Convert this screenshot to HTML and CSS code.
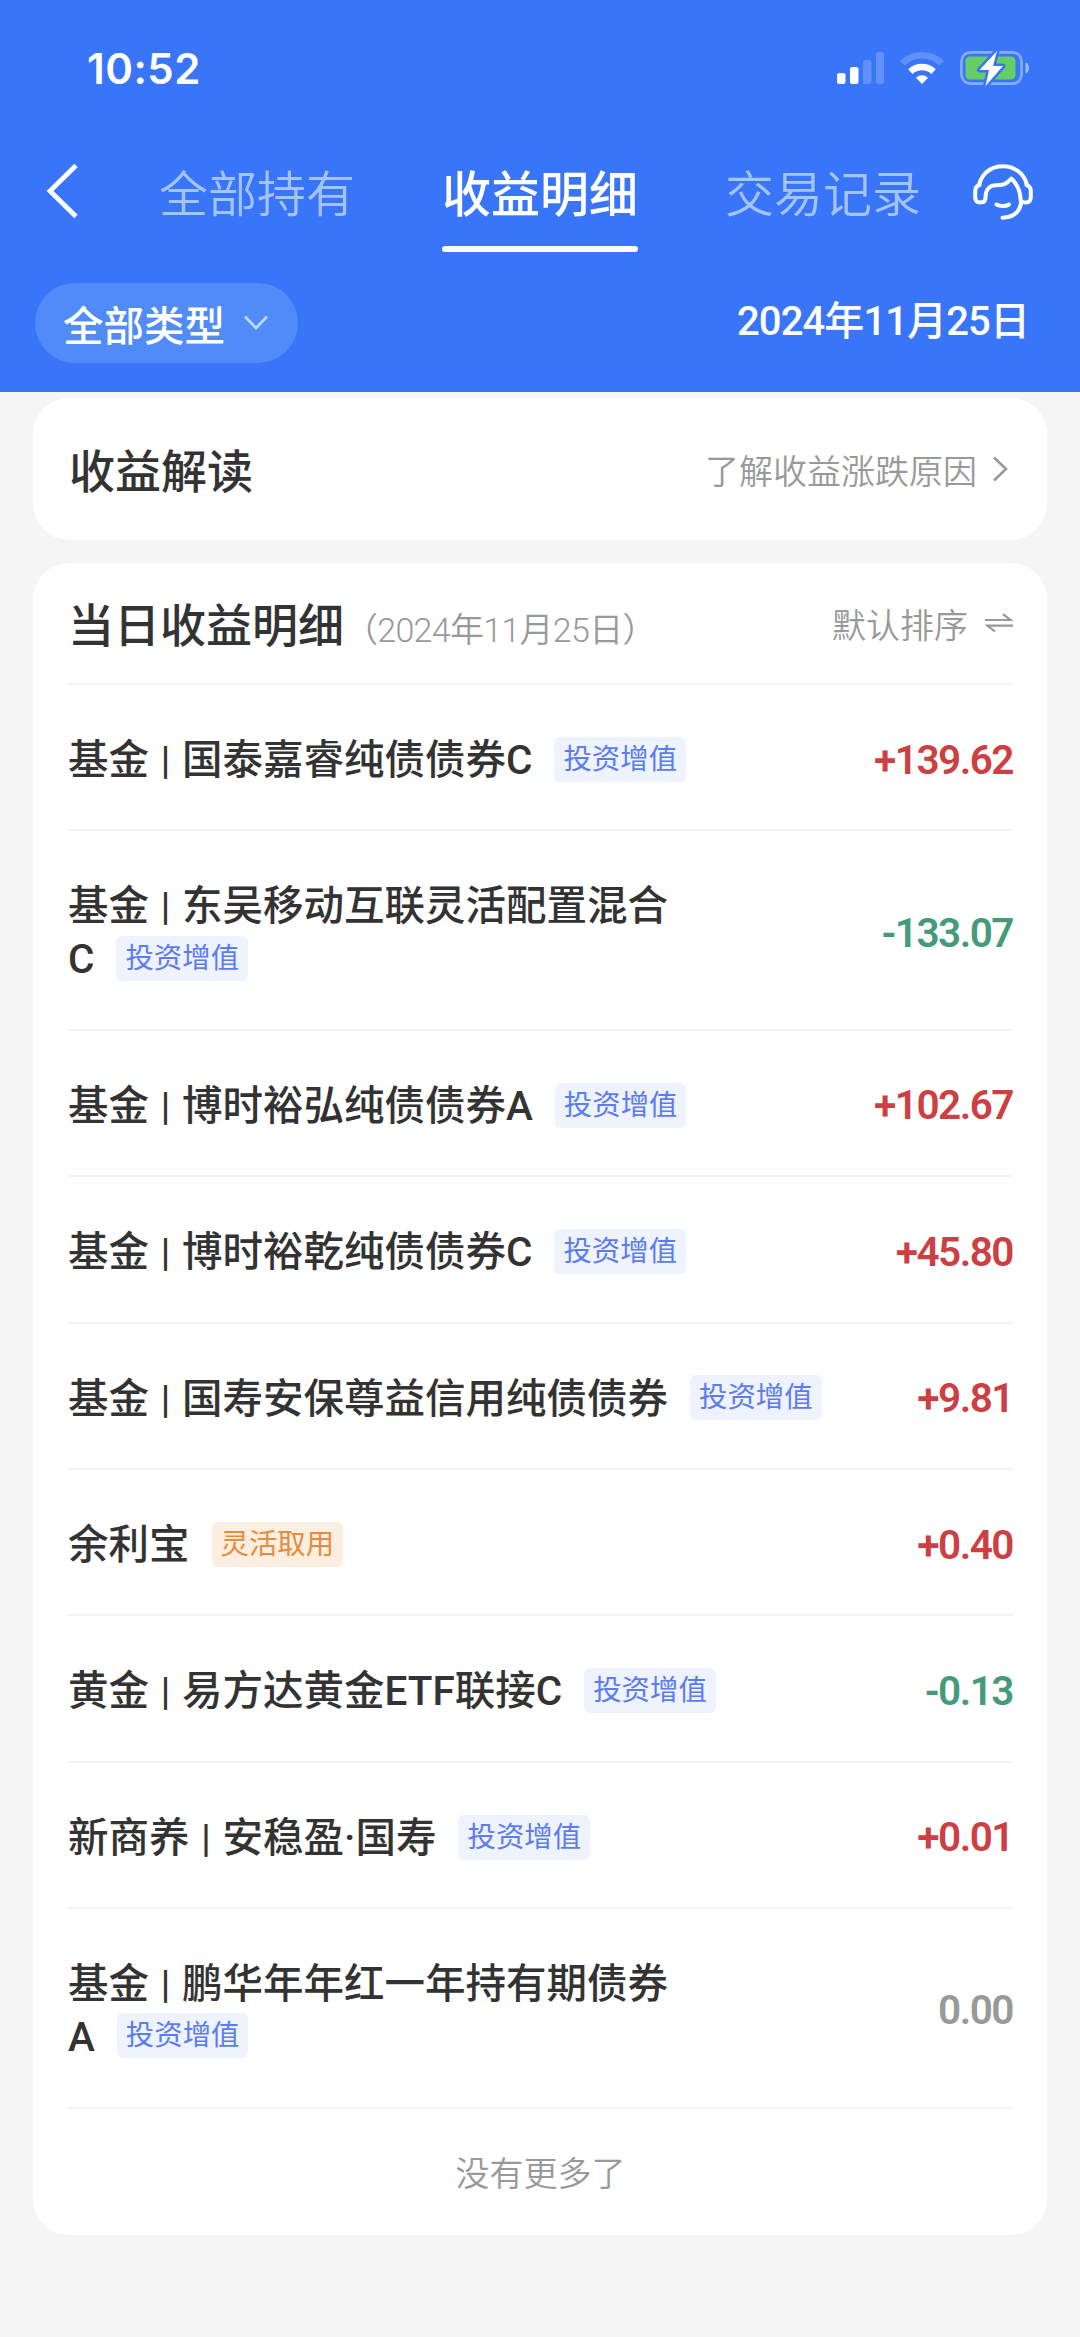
FILE: index.html
```html
<!DOCTYPE html>
<html lang="zh-CN">
<head>
  <meta charset="utf-8">
  <title>收益明细</title>
  <link rel="stylesheet" href="styles.css">
</head>
<body>
  <header class="header">
    <div class="status-bar">
      <span class="time">10:52</span>
      <div class="status-icons">
        <svg class="signal" width="47" height="34" viewBox="0 0 47 34" fill="#fff">
          <rect x="0" y="22" width="8.5" height="11" rx="2.2"/>
          <rect x="13" y="16" width="8.5" height="17" rx="2.2"/>
          <rect x="26" y="9" width="8.5" height="24" rx="2.2" opacity=".2"/>
          <rect x="39" y="1" width="8" height="32" rx="2.2" opacity=".2"/>
        </svg>
        <svg class="wifi" width="44" height="34" viewBox="0 0 44 34" fill="none" stroke="#fff">
          <path d="M2.2 12.2a28.5 28.5 0 0 1 39.6 0" stroke-width="6.4" opacity=".2"/>
          <path d="M10.4 20.6a17 17 0 0 1 23.2 0" stroke-width="6.4"/>
          <path d="M22 33l-6-6.2a8.6 8.6 0 0 1 12 0z" fill="#fff" stroke="none"/>
        </svg>
        <svg class="battery" width="70" height="36" viewBox="0 0 70 36">
          <rect x="1.4" y="2.4" width="60.2" height="31.2" rx="9" fill="none" stroke="#fff" stroke-width="2.6" opacity=".4"/>
          <rect x="5.5" y="6.5" width="50" height="23" rx="4.5" fill="#65ce67"/>
          <path d="M65.5 12.5c4.600 1.600 4.600 9.600 0 11.200z" fill="#fff" opacity=".5"/>
          <path d="M37 1L19.500 20h9.500L25.500 36l17.500-20H33z" fill="#fff" stroke="#3975f8" stroke-width="5" stroke-linejoin="round" paint-order="stroke"/>
        </svg>
      </div>
    </div>

    <nav class="nav">
      <svg class="back" width="34" height="56" viewBox="0 0 34 56" fill="none" stroke="#fff" stroke-width="4.8">
        <path d="M30 2.500L4 28l26 25.500"/>
      </svg>
      <div class="tabs">
        <a class="tab">全部持有</a>
        <a class="tab active">收益明细</a>
        <a class="tab">交易记录</a>
      </div>
      <svg class="service" width="60" height="56" viewBox="0 0 60 56" fill="none" stroke="#fff" stroke-width="4" stroke-linecap="round" stroke-linejoin="round">
        <path d="M6.500 19.500C9.500 9 18.500 2.200 29.800 2.200S50.500 9 53.500 19.500"/>
        <path d="M6.500 19.500v1.500C3.500 22 2.200 24 2.200 27v6c0 4 2 5.500 5.200 5.500s5.200-1.500 5.200-5.500c0-8 4.500-11.700 10.400-11.700 7 0 10.500-1 15.300-6.800C43 19 47.700 25 47.700 37"/>
        <path d="M53.500 19.500v1.500c3 1 4.300 3 4.300 6v6c0 4-2 5.500-5.200 5.500-1.800 0-3.300-.4-4.300-1.500-.8 10.500-7.500 16.500-18.800 16.700"/>
        <path d="M23.500 40.500c3.500 2 9 2.200 12.500 0"/>
      </svg>
    </nav>

    <div class="filter">
      <div class="type-picker">
        <span>全部类型</span>
        <svg width="24" height="16" viewBox="0 0 24 16" fill="none" stroke="#fff" stroke-width="2.800" opacity=".65">
          <path d="M1 1.500l11 11.500 11-11.500"/>
        </svg>
      </div>
      <span class="date">2024年11月25日</span>
    </div>
  </header>

  <main class="content">
    <section class="card insight">
      <h2>收益解读</h2>
      <a class="link">
        <span>了解收益涨跌原因</span>
        <svg width="15" height="26" viewBox="0 0 15 26" fill="none" stroke="#999" stroke-width="2.600">
          <path d="M1 1.500l12 11.500L1 24.500"/>
        </svg>
      </a>
    </section>

    <section class="card details">
      <div class="details-head">
        <h2>当日收益明细</h2>
        <span class="day">（2024年11月25日）</span>
        <a class="sort">
          <span>默认排序</span>
          <svg width="28" height="20" viewBox="0 0 28 20" fill="none" stroke="#999" stroke-width="2.200">
            <path d="M0 7h25.500L18 1.200M28 12.700H2.500L10 18.500"/>
          </svg>
        </a>
      </div>

      <ul class="list">
        <li class="row">
          <div class="name">基金<i>|</i>国泰嘉睿纯债债券C<span class="tag">投资增值</span></div>
          <div class="amount up">+139.62</div>
        </li>
        <li class="row">
          <div class="name two-line">基金<i>|</i>东吴移动互联灵活配置混合<br>C<span class="tag">投资增值</span></div>
          <div class="amount down">-133.07</div>
        </li>
        <li class="row">
          <div class="name">基金<i>|</i>博时裕弘纯债债券A<span class="tag">投资增值</span></div>
          <div class="amount up">+102.67</div>
        </li>
        <li class="row">
          <div class="name">基金<i>|</i>博时裕乾纯债债券C<span class="tag">投资增值</span></div>
          <div class="amount up">+45.80</div>
        </li>
        <li class="row">
          <div class="name">基金<i>|</i>国寿安保尊益信用纯债债券<span class="tag">投资增值</span></div>
          <div class="amount up">+9.81</div>
        </li>
        <li class="row">
          <div class="name">余利宝<span class="tag flexible">灵活取用</span></div>
          <div class="amount up">+0.40</div>
        </li>
        <li class="row">
          <div class="name">黄金<i>|</i>易方达黄金ETF联接C<span class="tag">投资增值</span></div>
          <div class="amount down">-0.13</div>
        </li>
        <li class="row">
          <div class="name">新商养<i>|</i>安稳盈·国寿<span class="tag">投资增值</span></div>
          <div class="amount up">+0.01</div>
        </li>
        <li class="row">
          <div class="name two-line">基金<i>|</i>鹏华年年红一年持有期债券<br>A<span class="tag">投资增值</span></div>
          <div class="amount">0.00</div>
        </li>
      </ul>

      <p class="no-more">没有更多了</p>
    </section>
  </main>
</body>
</html>
```
FILE: styles.css
```css
* {
  box-sizing: border-box;
}

body {
  margin: 0;
  background: #f5f5f5;
  color: #333;
  font-family: Roboto, "Noto Sans CJK SC", sans-serif;
}

h2, ul, p {
  margin: 0;
  padding: 0;
}

svg {
  display: block;
  flex: none;
}

/* header */
.header {
  height: 392px;
  background: #3975f8;
  color: #fff;
}

.status-bar {
  display: flex;
  justify-content: space-between;
  height: 138px;
  padding: 50px 50px 0 87px;
}

.time {
  font-family: Inter, sans-serif;
  font-size: 42px;
  font-weight: 600;
  line-height: 38px;
  letter-spacing: 0.5px;
}

.status-icons {
  display: flex;
  align-items: flex-start;
}

.signal {
  margin: 1px 16px 0 0;
}

.wifi {
  margin: 1px 16px 0 0;
}

.nav {
  display: flex;
  height: 145px;
  padding: 0 47px 0 46px;
}

.back {
  margin-top: 25px;
}

.tabs {
  display: flex;
  gap: 87px;
  margin-left: 79px;
}

.tab {
  height: 114px;
  padding-top: 22px;
  font-size: 49px;
  line-height: 72px;
  font-weight: 350;
  color: #a5c3fd;
  white-space: nowrap;
}

.tab.active {
  color: #fff;
  font-weight: 500;
  position: relative;
}

.tab.active::after {
  content: "";
  position: absolute;
  left: 0;
  right: 0;
  bottom: 0;
  height: 6px;
  border-radius: 3px;
  background: #fff;
}

.service {
  margin: 26px 0 0 auto;
}

.filter {
  display: flex;
  justify-content: space-between;
  padding: 0 51px 0 35px;
}

.type-picker {
  display: flex;
  align-items: center;
  gap: 19px;
  width: 263px;
  height: 80px;
  padding-left: 28px;
  border-radius: 40px;
  background: #508bf8;
  font-size: 40.5px;
  font-weight: 500;
}

.date {
  font-size: 40px;
  font-weight: 500;
  line-height: 78px;
  letter-spacing: -0.9px;
}

/* cards */
.content {
  padding: 6px 33px 0;
}

.card {
  border-radius: 36px;
  background: #fff;
}

.card h2 {
  padding-top: 5px;
  font-size: 46px;
  font-weight: 500;
  line-height: 60px;
}

.insight {
  display: flex;
  align-items: center;
  justify-content: space-between;
  height: 142px;
  padding: 0 39px 0 36px;
}

.link, .sort {
  display: flex;
  align-items: center;
  font-size: 34px;
  font-weight: 350;
  color: #999;
}

.link {
  gap: 16px;
}

.details {
  height: 1672px;
  margin-top: 23px;
  padding: 0 34px 0 35px;
}

.details-head {
  display: flex;
  align-items: center;
  height: 122px;
  border-bottom: 2px solid #f3f3f3;
}

.day {
  margin-top: 8px;
  font-size: 34px;
  font-weight: 350;
  letter-spacing: -0.7px;
  color: #999;
}

.sort {
  gap: 17px;
  margin-left: auto;
}

/* list */
.list {
  list-style: none;
}

.row {
  display: flex;
  align-items: center;
  justify-content: space-between;
  padding: 46px 0;
  border-bottom: 2px solid #f3f3f3;
}

.name {
  height: 52.4px;
  padding-top: 3px;
  font-size: 40.5px;
  font-weight: 500;
  line-height: 52.4px;
}

.name.two-line {
  height: 105.4px;
}

.name i {
  display: inline-block;
  width: 33px;
  font-style: normal;
  font-size: 38px;
  line-height: 40px;
  text-align: center;
}

.tag {
  display: inline-block;
  position: relative;
  top: -4px;
  height: 45px;
  margin-left: 22px;
  padding: 0 9px;
  border-radius: 6px;
  background: #eff2ff;
  color: #5b7cf0;
  font-size: 28.4px;
  font-weight: 400;
  line-height: 45px;
  vertical-align: middle;
}

.tag.flexible {
  background: #fceee0;
  color: #e68c3c;
}

.amount {
  padding-top: 5px;
  font-size: 40.5px;
  font-weight: 600;
  line-height: 46px;
  letter-spacing: -1.5px;
  color: #999;
}

.amount.up {
  color: #cc4043;
}

.amount.down {
  color: #459a7a;
}

.no-more {
  padding-top: 40px;
  font-size: 34px;
  font-weight: 350;
  line-height: 50px;
  color: #999;
  text-align: center;
}
```
